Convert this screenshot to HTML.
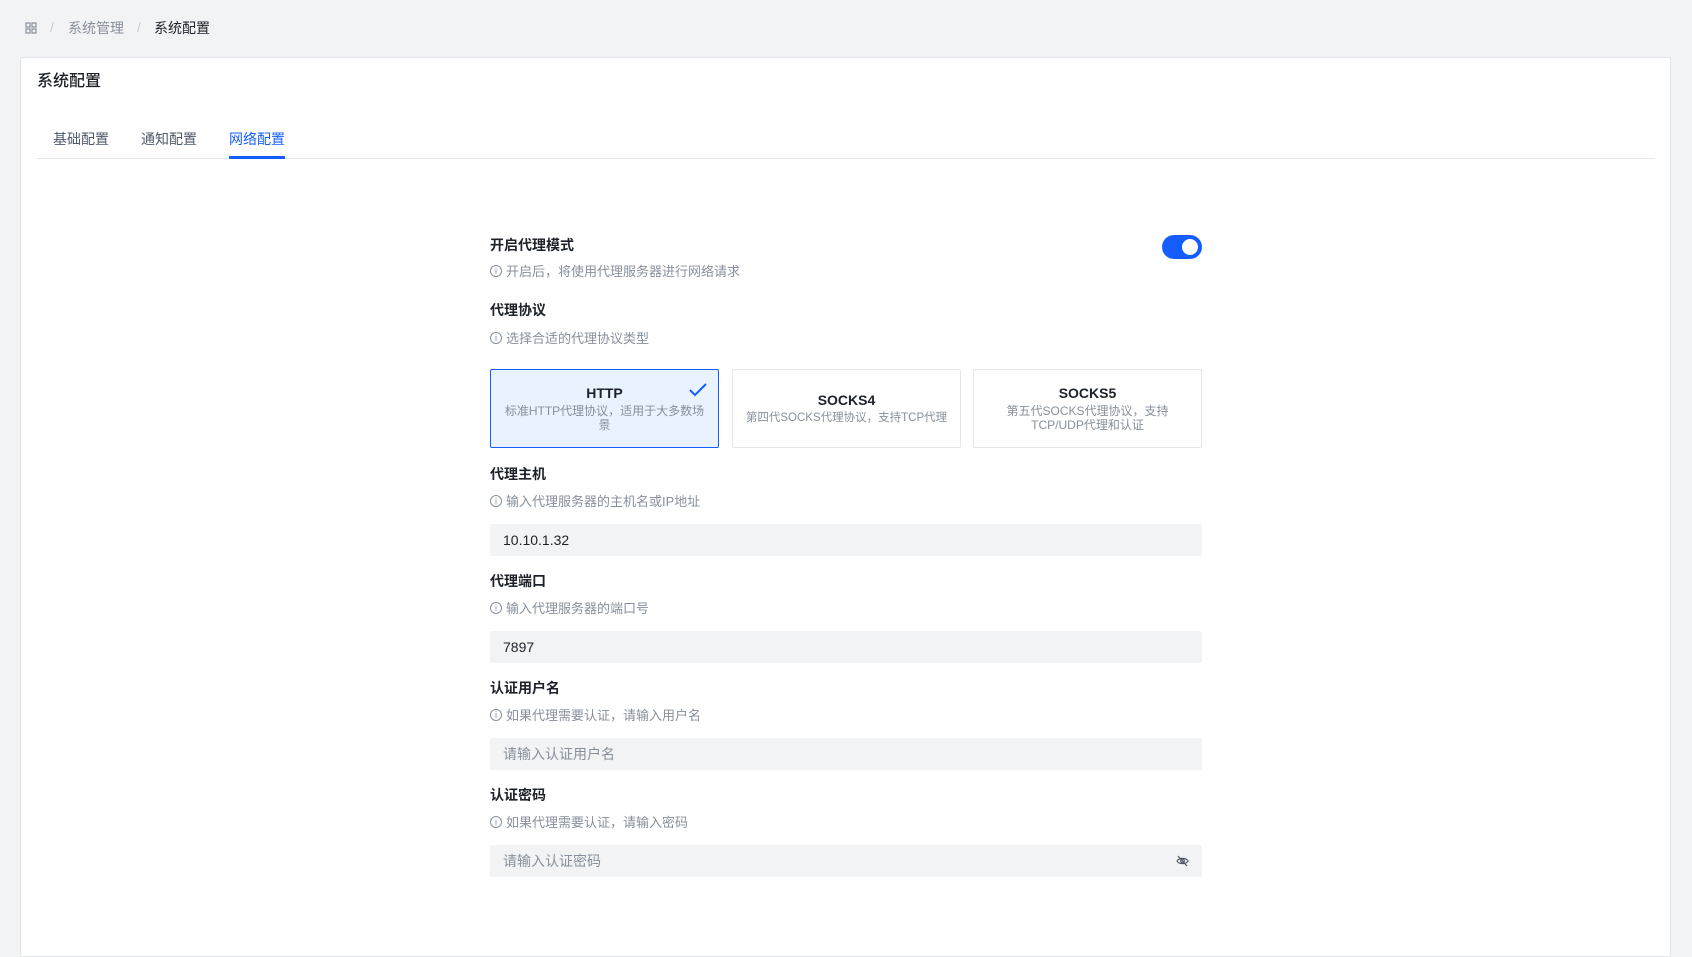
<!DOCTYPE html>
<html><head><meta charset="utf-8"><style>
*{box-sizing:border-box;margin:0;padding:0}
body{width:1692px;height:885px;overflow:hidden;background:#f2f3f5;font-family:"Liberation Sans","Noto Sans CJK SC",sans-serif;color:#1d2129;position:relative}
.a{position:absolute;white-space:nowrap}
.card{position:absolute;left:20px;top:57px;width:1651px;height:900px;background:#fff;border:1px solid #e5e6eb;border-radius:2px}
.lbl{font-size:14px;font-weight:600;color:#1d2129;left:490px}
.hint{font-size:13px;color:#86909c;left:490px;display:flex;align-items:center;gap:4px}
.hint i{display:inline-block;width:12px;height:12px;border:1px solid #86909c;border-radius:50%;font-style:normal;font-size:9px;line-height:10px;text-align:center}
.inp{position:absolute;left:490px;width:712px;height:32px;background:#f2f3f5;border-radius:2px;font-size:14px;padding-left:13px;line-height:32px}
.pc{position:absolute;top:369px;height:79px;border:1px solid #e5e6eb;border-radius:2px;text-align:center;display:flex;flex-direction:column;justify-content:center;align-items:center}
.pc b{font-size:14px;font-weight:600;color:#1d2129}
.pc span{font-size:12px;color:#86909c;line-height:14px;margin-top:3px;white-space:normal}
</style></head><body>
<svg class="a" style="left:25px;top:22px" width="12" height="12" viewBox="0 0 12 12" fill="none" stroke="#86909c" stroke-width="1.2"><rect x="1" y="1" width="4" height="4"/><rect x="7" y="1" width="4" height="4"/><rect x="1" y="7" width="4" height="4"/><rect x="7" y="7" width="4" height="4"/></svg>
<div class="a" style="left:50px;top:19px;font-size:14px;color:#c9cdd4">/</div>
<div class="a" style="left:68px;top:18px;font-size:14px;color:#86909c">系统管理</div>
<div class="a" style="left:137px;top:19px;font-size:14px;color:#c9cdd4">/</div>
<div class="a" style="left:154px;top:18px;font-size:14px;color:#1d2129">系统配置</div>
<div class="card"></div>
<div class="a" style="left:37px;top:67px;font-size:16px;font-weight:500">系统配置</div>
<div class="a" style="left:53px;top:129px;font-size:14px;color:#4e5969">基础配置</div>
<div class="a" style="left:141px;top:129px;font-size:14px;color:#4e5969">通知配置</div>
<div class="a" style="left:229px;top:129px;font-size:14px;color:#165dff">网络配置</div>
<div class="a" style="left:37px;top:158px;width:1618px;height:1px;background:#e5e6eb"></div>
<div class="a" style="left:229px;top:156px;width:56px;height:3px;background:#165dff"></div>

<div class="a lbl" style="top:235px">开启代理模式</div>
<div class="a" style="left:1162px;top:235px;width:40px;height:24px;border-radius:12px;background:#165dff"><div style="position:absolute;right:4px;top:4px;width:16px;height:16px;border-radius:50%;background:#fff"></div></div>
<div class="a hint" style="top:261px"><i>i</i>开启后，将使用代理服务器进行网络请求</div>

<div class="a lbl" style="top:300px">代理协议</div>
<div class="a hint" style="top:328px"><i>i</i>选择合适的代理协议类型</div>
<div class="pc" style="left:490px;width:229px;background:#e8f3ff;border-color:#165dff"><b>HTTP</b><span>标准HTTP代理协议，适用于大多数场<br>景</span>
<svg style="position:absolute;right:10px;top:12px" width="20" height="16" viewBox="0 0 20 16" fill="none" stroke="#165dff" stroke-width="2"><path d="M2 8l5 5L18 2"/></svg></div>
<div class="pc" style="left:732px;width:229px"><b>SOCKS4</b><span style="white-space:nowrap;font-size:11.5px">第四代SOCKS代理协议，支持TCP代理</span></div>
<div class="pc" style="left:973px;width:229px"><b>SOCKS5</b><span>第五代SOCKS代理协议，支持<br>TCP/UDP代理和认证</span></div>

<div class="a lbl" style="top:464px">代理主机</div>
<div class="a hint" style="top:491px"><i>i</i>输入代理服务器的主机名或IP地址</div>
<div class="inp" style="top:524px">10.10.1.32</div>

<div class="a lbl" style="top:571px">代理端口</div>
<div class="a hint" style="top:598px"><i>i</i>输入代理服务器的端口号</div>
<div class="inp" style="top:631px">7897</div>

<div class="a lbl" style="top:678px">认证用户名</div>
<div class="a hint" style="top:705px"><i>i</i>如果代理需要认证，请输入用户名</div>
<div class="inp" style="top:738px;color:#86909c">请输入认证用户名</div>

<div class="a lbl" style="top:785px">认证密码</div>
<div class="a hint" style="top:812px"><i>i</i>如果代理需要认证，请输入密码</div>
<div class="inp" style="top:845px;color:#86909c">请输入认证密码
<svg style="position:absolute;right:13px;top:10px" width="13" height="12" viewBox="0 0 13 12" fill="none" stroke="#4e5969" stroke-width="1.2"><path d="M1 6c2-3.5 9-3.5 11 0c-2 3.5-9 3.5-11 0z"/><circle cx="6.5" cy="6" r="1.8"/><path d="M2 1l9 10"/></svg></div>
</body></html>
